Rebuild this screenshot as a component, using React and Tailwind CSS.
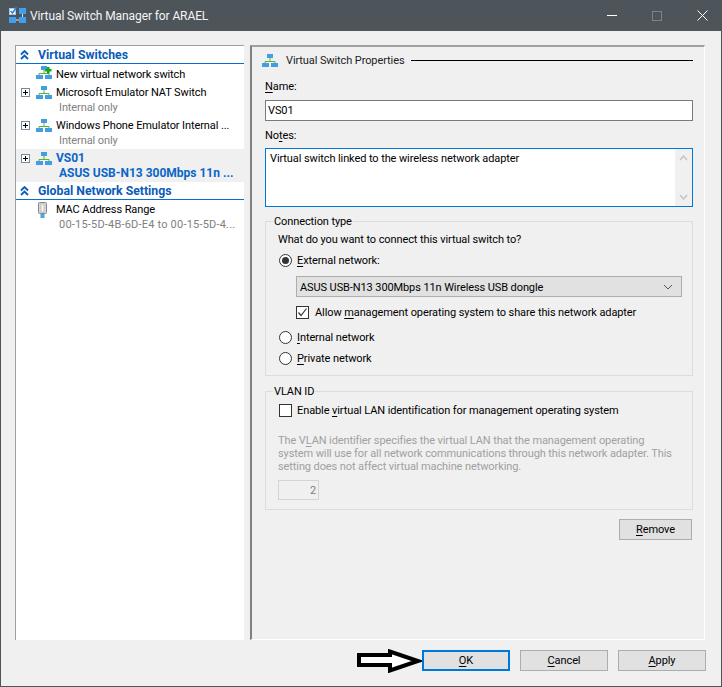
import React from "react";

function NetIcon({ plus }) {
  return (
    <svg width="16" height="13" viewBox="0 0 16 13" className="shrink-0">
      <rect x="5" y="0" width="6" height="4" fill="#3f9ee6" />
      <path d="M8 4V7.500M3 9V7.500H13V9" fill="none" stroke="#5cb531" strokeWidth="1" />
      <rect x="0" y="9" width="7" height="4" fill="#3f9ee6" />
      <rect x="9" y="9" width="7" height="4" fill="#3f9ee6" />
      {plus && <path d="M9 3H11V1H13.500V3H15.500V5.500H13.500V7.500H11V5.500H9Z" fill="#12a81e" />}
    </svg>
  );
}

function TitleIcon() {
  return (
    <svg width="17" height="17" viewBox="0 1 17 17" className="shrink-0">
      <rect x="0.500" y="2.500" width="6" height="6" fill="#fff" stroke="#a8c8e8" />
      <path d="M1.500 5L3.500 7L7.500 1" fill="none" stroke="#2f80d8" strokeWidth="1.500" />
      <rect x="10" y="2" width="7" height="6" fill="#3fa0f0" />
      <rect x="0" y="11" width="7" height="6" fill="#3fa0f0" />
      <rect x="10" y="11" width="7" height="6" fill="#3fa0f0" />
      <path d="M13.500 8V11M7 14H10" stroke="#d8e8f8" fill="none" />
    </svg>
  );
}

function Chevrons() {
  return (
    <svg width="9" height="10" viewBox="0 0 9 10" className="shrink-0">
      <path d="M1 4.500L4.500 1L8 4.500M1 9L4.500 5.500L8 9" fill="none" stroke="#0a5cb8" strokeWidth="1.800" />
    </svg>
  );
}

function Expander() {
  return (
    <svg width="9" height="9" viewBox="0 0 9 9" className="shrink-0">
      <rect x="0.500" y="0.500" width="8" height="8" fill="#fff" stroke="#7a8a9a" />
      <path d="M2 4.500H7M4.500 2V7" stroke="#000" />
    </svg>
  );
}

function PortIcon() {
  return (
    <svg width="9" height="16" viewBox="0 0 9 16" className="shrink-0">
      <rect x="0.500" y="0.500" width="8" height="11" rx="1" fill="#d8d8d8" stroke="#808890" />
      <rect x="3" y="2" width="3" height="8" fill="#f4f4f4" stroke="#a0a0a0" strokeWidth="0.500" />
      <rect x="2.500" y="12" width="4" height="4" fill="#4fa3e0" />
    </svg>
  );
}

function SectionHead({ children }) {
  return (
    <div className="flex h-[18px] items-center gap-[9px] border-b border-[#0a6ccc] pl-[4px] pt-[1px] text-[12.25px] font-bold leading-[15px] tracking-normal text-[#0a5cb8]">
      <Chevrons />
      <span>{children}</span>
    </div>
  );
}

function TreeItem({ expander, icon, title, sub, selected }) {
  return (
    <div className={`flex h-[33px] ${selected ? "bg-[#f0f0f0]" : ""}`}>
      <div className="flex w-[19px] shrink-0 justify-end pt-[5px] pr-[5px]">{expander && <Expander />}</div>
      <div className="flex w-[21px] shrink-0 justify-start pl-[1px] pt-[3px]">{icon}</div>
      <div className={`min-w-0 flex-1 pt-[2px] leading-[15px] ${selected ? "text-[12px] font-bold tracking-normal text-[#0a66c8]" : ""}`}>
        <div className={`h-[15px] whitespace-nowrap ${selected ? "" : "text-black"}`}>{title}</div>
        <div className={`h-[15px] whitespace-nowrap pl-[3px] ${selected ? "" : "text-[#808080]"}`}>{sub}</div>
      </div>
    </div>
  );
}

function U({ children }) {
  return <span className="underline underline-offset-2">{children}</span>;
}

function Radio({ checked }) {
  return (
    <span className="flex h-[13px] w-[13px] shrink-0 items-center justify-center rounded-full border border-[#333] bg-white">
      {checked && <span className="h-[7px] w-[7px] rounded-full bg-[#333]" />}
    </span>
  );
}

function Check({ checked }) {
  return (
    <span className="flex h-[13px] w-[13px] shrink-0 items-center justify-center border border-[#333] bg-white">
      {checked && (
        <svg width="11" height="11" viewBox="0 0 11 11">
          <path d="M1.500 5.500L4 8.500L9.500 1.500" fill="none" stroke="#333" strokeWidth="1.200" />
        </svg>
      )}
    </span>
  );
}

function Group({ legend, className, children }) {
  return (
    <div className={`relative border border-[#dcdcdc] ${className}`}>
      <span className="absolute -top-[8px] left-[7px] bg-[#f0f0f0] px-[1px] leading-[15px] text-black">{legend}</span>
      {children}
    </div>
  );
}

function Btn({ children, focused, className = "" }) {
  return (
    <div
      className={`flex h-[21px] items-center justify-center bg-[#e1e1e1] leading-[15px] text-black ${
        focused ? "border-2 border-[#0078d7]" : "border border-[#adadad]"
      } ${className}`}
    >
      {children}
    </div>
  );
}

export default function App() {
  return (
    <div
      className="flex h-[687px] w-[722px] flex-col border border-t-0 border-[#4d555a] bg-[#f0f0f0] text-[11px] tracking-[-0.1px] text-black"
      style={{ fontFamily: 'Roboto, "Noto Sans", sans-serif' }}
    >
      <div className="flex h-[31px] shrink-0 items-center bg-[#4d555a] pl-[8px] text-white">
        <TitleIcon />
        <span className="ml-[4px] text-[12px] leading-[16px] text-[#f4f4f4]">Virtual Switch Manager for ARAEL</span>
        <div className="ml-auto flex items-center">
          <div className="h-[1px] w-[10px] bg-white" />
          <div className="ml-[35px] h-[10px] w-[10px] border border-[#7a8388]" />
          <svg width="11" height="11" viewBox="0 0 11 11" className="ml-[35px] mr-[13px]">
            <path d="M0.500 0.500L10.500 10.500M10.500 0.500L0.500 10.500" stroke="#fff" />
          </svg>
        </div>
      </div>

      <div className="flex h-[609px] shrink-0 pl-[14px] pr-[16px] pt-[14px]">
        <div className="w-[229px] shrink-0 border border-b-0 border-r-0 border-[#a0a0a0] bg-white">
          <SectionHead>Virtual Switches</SectionHead>
          <div className="flex h-[19px]">
            <div className="w-[19px] shrink-0" />
            <div className="w-[21px] shrink-0 pl-[1px] pt-[2px]"><NetIcon plus /></div>
            <div className="pt-[3px] leading-[15px]">New virtual network switch</div>
          </div>
          <TreeItem expander icon={<NetIcon />} title="Microsoft Emulator NAT Switch" sub="Internal only" />
          <TreeItem expander icon={<NetIcon />} title="Windows Phone Emulator Internal ..." sub="Internal only" />
          <TreeItem expander selected icon={<NetIcon />} title="VS01" sub="ASUS USB-N13 300Mbps 11n ..." />
          <SectionHead>Global Network Settings</SectionHead>
          <div className="flex h-[33px]">
            <div className="w-[19px] shrink-0" />
            <div className="flex w-[21px] shrink-0 justify-center pr-[6px] pt-[2px]"><PortIcon /></div>
            <div className="min-w-0 flex-1 pt-[2px] leading-[15px]">
              <div className="h-[15px]">MAC Address Range</div>
              <div className="h-[15px] whitespace-nowrap pl-[3px] tracking-[0.2px] text-[#808080]">00-15-5D-4B-6D-E4 to 00-15-5D-4...</div>
            </div>
          </div>
        </div>

        <div className="ml-[6px] min-w-0 flex-1 border border-b-white border-l-2 border-r-white border-t-2 border-l-[#808080] border-t-[#a0a0a0] pl-[13px] pr-[11px]">
          <div className="-ml-[3px] flex h-[26px] items-center">
            <NetIcon />
            <span className="ml-[8px] leading-[15px] text-[#222]">Virtual Switch Properties</span>
            <div className="ml-[7px] h-[1px] flex-1 bg-black" />
          </div>
          <div className="mt-[6px] leading-[15px]"><U>N</U>ame:</div>
          <div className="mt-[6px] flex h-[21px] items-center border border-[#7a7a7a] bg-white pl-[2px] leading-[15px]">VS01</div>
          <div className="mt-[7px] leading-[15px]">No<U>t</U>es:</div>
          <div className="mt-[5px] flex h-[59px] border border-[#0078d7] bg-white">
            <div className="flex-1 pl-[4px] pt-[2px] leading-[15px]">Virtual switch linked to the wireless network adapter</div>
            <div className="flex w-[17px] flex-col items-center justify-between bg-[#f0f0f0] py-[6px]">
              <svg width="9" height="6" viewBox="0 0 9 6"><path d="M1 5L4.500 1L8 5" fill="none" stroke="#c4c4c4" strokeWidth="1.500" /></svg>
              <svg width="9" height="6" viewBox="0 0 9 6"><path d="M1 1L4.500 5L8 1" fill="none" stroke="#c4c4c4" strokeWidth="1.500" /></svg>
            </div>
          </div>

          <Group legend="Connection type" className="mt-[14px] h-[155px]">
            <div className="pl-[12px] pt-[10px] leading-[15px]">What do you want to connect this virtual switch to?</div>
            <div className="mt-[6px] flex items-center gap-[5px] pl-[13px] leading-[15px]">
              <Radio checked />
              <span><U>E</U>xternal network:</span>
            </div>
            <div className="ml-[30px] mr-[10px] mt-[8px] flex h-[21px] items-center justify-between border border-[#adadad] bg-[#e1e1e1] pl-[3px] pr-[8px] pt-[1px] leading-[15px]">
              <span>ASUS USB-N13 300Mbps 11n Wireless USB dongle</span>
              <svg width="10" height="6" viewBox="0 0 10 6"><path d="M1 1L5 5L9 1" fill="none" stroke="#555" /></svg>
            </div>
            <div className="ml-[30px] mt-[8px] flex items-center gap-[6px] leading-[15px]">
              <Check checked />
              <span>Allow <U>m</U>anagement operating system to share this network adapter</span>
            </div>
            <div className="mt-[10px] flex items-center gap-[5px] pl-[13px] leading-[15px]">
              <Radio />
              <span><U>I</U>nternal network</span>
            </div>
            <div className="mt-[6px] flex items-center gap-[5px] pl-[13px] leading-[15px]">
              <Radio />
              <span><U>P</U>rivate network</span>
            </div>
          </Group>

          <Group legend="VLAN ID" className="mt-[15px] h-[119px]">
            <div className="mt-[11px] flex items-center gap-[5px] pl-[13px] leading-[15px]">
              <Check />
              <span>Enable <U>v</U>irtual LAN identification for management operating system</span>
            </div>
            <div className="mt-[16px] whitespace-nowrap pl-[12px] leading-[13px] text-[#a0a0a0]">
              The V<U>L</U>AN identifier specifies the virtual LAN that the management operating<br />
              system will use for all network communications through this network adapter. This<br />
              setting does not affect virtual machine networking.
            </div>
            <div className="ml-[12px] mt-[7px] flex h-[20px] w-[41px] items-center justify-end border border-[#d4d4d4] pr-[2px] leading-[15px] text-[#808080]">2</div>
          </Group>

          <div className="mt-[9px] flex justify-end">
            <Btn className="mr-[1px] w-[73px]"><U>R</U>emove</Btn>
          </div>
        </div>
      </div>

      <div className="flex items-start justify-end pr-[15px] pt-[9px]">
        <svg width="65" height="24" viewBox="0 0 65 24">
          <path d="M2 6H33V2.500L61 12L33 21.500V16H2Z" fill="#fff" stroke="#000" strokeWidth="4" />
        </svg>
        <Btn focused className="mt-[1px] w-[88px]"><U>O</U>K</Btn>
        <Btn className="ml-[10px] mt-[1px] w-[88px]"><U>C</U>ancel</Btn>
        <Btn className="ml-[10px] mt-[1px] w-[88px]"><U>A</U>pply</Btn>
      </div>
    </div>
  );
}
